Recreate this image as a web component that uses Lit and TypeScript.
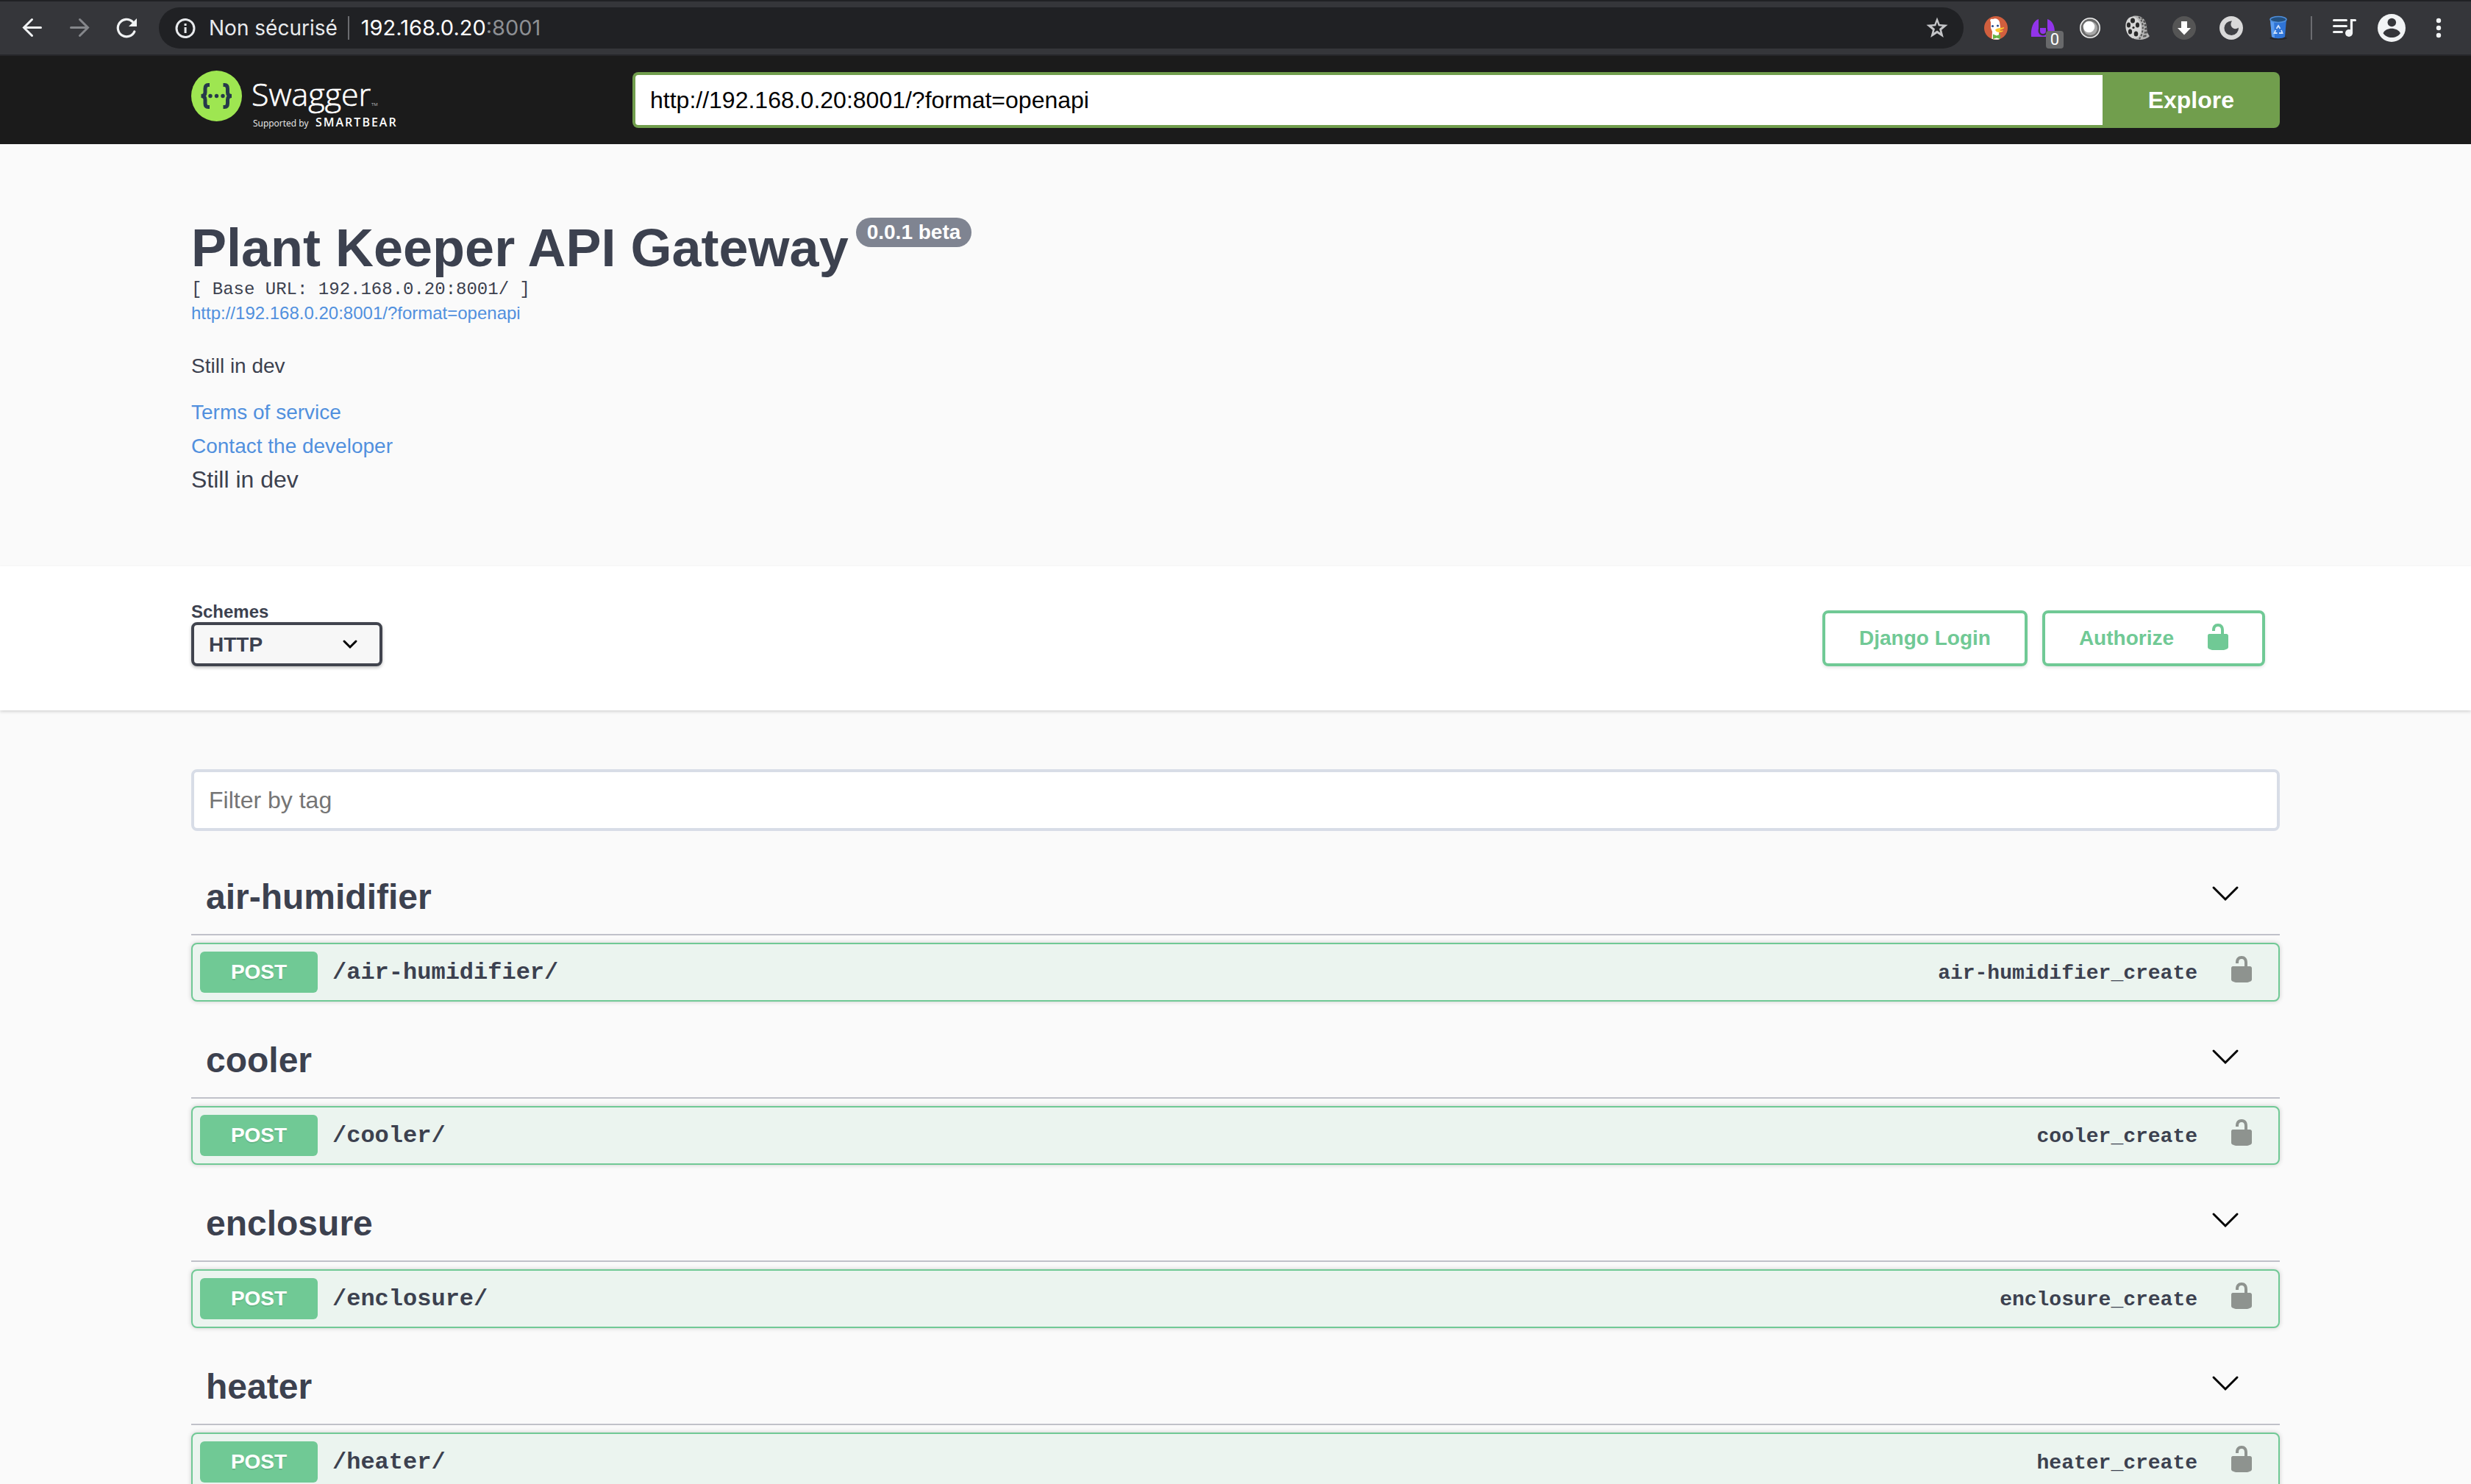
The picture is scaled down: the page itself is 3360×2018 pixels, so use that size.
import { LitElement, html, css, svg } from "lit";
import { customElement, property } from "lit/decorators.js";

const sans = css`"Liberation Sans", Arial, Helvetica, sans-serif`;
const mono = css`"Liberation Mono", "Courier New", monospace`;

const unlocked = svg`<path d="M15.8 8H14V5.6C14 2.703 12.665 1 10 1 7.334 1 6 2.703 6 5.6V6h2v-.801C8 3.754 8.797 3 10 3c1.203 0 2 .754 2 2.199V8H4c-.553 0-1 .646-1 1.199V17c0 .549.428 1.139.951 1.307l1.197.387C5.672 18.861 6.55 19 7.1 19h5.8c.549 0 1.428-.139 1.951-.307l1.196-.387c.524-.167.953-.757.953-1.306V9.199C17 8.646 16.352 8 15.8 8z"/>`;

/* Browser toolbar icons, each drawn in a 40 by 40 box */
const icons = {
  back: svg`<path d="M31.500 19.500H10M19.500 8.500l-11 11 11 11" fill="none" stroke="#f1f3f4" stroke-width="3" stroke-linecap="round"/>`,
  forward: svg`<path d="M8.500 19.500H30M20.500 8.500l11 11-11 11" fill="none" stroke="#85878b" stroke-width="3" stroke-linecap="round"/>`,
  reload: svg`<path d="M30.800 25A11.800 11.800 0 1 1 28.200 11.500" fill="none" stroke="#f1f3f4" stroke-width="3.200" stroke-linecap="round"/><path d="M34 7v11H23z" fill="#f1f3f4"/>`,
  info: svg`<circle cx="20" cy="20.500" r="12" fill="none" stroke="#e8eaed" stroke-width="3"/><path d="M18.600 19h3v8h-3zM18.600 14h3v3h-3z" fill="#e8eaed"/>`,
  star: svg`<path fill-rule="evenodd" fill="#c4c5c8" d="M20 5.500 23.600 15l10.900.8-8.400 7 2.700 10.200L20 27.300 11.200 33l2.700-10.200-8.400-7 10.900-.8zM20 12l-1.800 5.200-5.400.5 4.200 3.500-1.400 5.300 4.400-2.900 4.400 2.900-1.400-5.300 4.200-3.500-5.400-.5z"/>`,
  duck: svg`<circle cx="20" cy="20" r="16" fill="#d15f3e"/>
    <path d="M13 12c-2-3 0-5 3-4 3-2 8 0 9 4l1 7-2 9 1 7.200q-5 1.500-10.500-.4L15 25l-2-5z" fill="#fff"/>
    <circle cx="15.500" cy="17.500" r="1.600" fill="#2d4f8e"/><circle cx="22.500" cy="17" r="1.600" fill="#2d4f8e"/>
    <path d="M19 22.500c3-3 7-2 12-3.500 1 2-4 3.500-7 4 2 1 5 .5 6 .5 0 3-10 4-11-1z" fill="#fbc92f"/>
    <path d="M16 28.500l5 2 5-2v6.500l-5-1.500-5 1.500z" fill="#67b346"/>`,
  purple: svg`<path d="M4 32C3 20 7 10 14 8v13c0 7 2 9 6 9s6-2 6-9V8c7 2 10 9 10 18v6z" fill="#9234ea"/><circle cx="20" cy="24" r="6.500" fill="#35363a"/><path d="M16 20h8v4a4 4 0 0 1-8 0z" fill="#9234ea"/>
    <rect x="24" y="24" width="24" height="24" rx="4" fill="#68696b"/>`,
  orb: svg`<circle cx="20" cy="20" r="13.200" fill="#6a6a6a" stroke="#efefef" stroke-width="1.600"/><circle cx="20.500" cy="20.500" r="9.500" fill="#a8a8a8"/><circle cx="18.500" cy="18.500" r="7.800" fill="#fff"/>`,
  film: svg`<path d="M14 4c9-2 18 2 19 14 0 7 2 11 4 13-4 5-14 6-21 4z" fill="#b5b5b5"/>
    <path d="M22 5c7 5 8 20 1 30M26 6c6 6 7 19 2 28M30 10c4 7 4 16 1 22" stroke="#555" stroke-width="2" fill="none" stroke-dasharray="3 2"/>
    <ellipse cx="15" cy="19.500" rx="10.500" ry="15" transform="rotate(-10 15 19.500)" fill="#d6d6d6"/>
    <g fill="#2a2a2a"><ellipse cx="14" cy="10" rx="3" ry="3.600"/><ellipse cx="8.500" cy="16" rx="2.600" ry="3.500"/><ellipse cx="20.500" cy="16" rx="2.600" ry="3.500"/><ellipse cx="10.500" cy="25" rx="2.600" ry="3.500"/><ellipse cx="18.500" cy="28" rx="2.800" ry="3.500"/><circle cx="15" cy="19.500" r="1.600"/></g>`,
  download: svg`<circle cx="20" cy="20" r="16" fill="#555"/><path d="M16 11h8v9h5l-9 9.500L11 20h5z" fill="#fff"/>`,
  moon: svg`<circle cx="20" cy="20" r="16" fill="#d9d9d9"/><path d="M21 10.500a9.800 9.800 0 1 0 9 9c-6 5-14-2-9-9z" fill="#404145"/>`,
  bin: svg`<ellipse cx="20" cy="34" rx="12" ry="2" fill="#26272a"/><path d="M9 8h22l-2 24c-3 3-15 3-18 0z" fill="#2f74d6"/><path d="M9 8h5l1 25c-2 0-3-.5-4-1z" fill="#5a9cf0"/><ellipse cx="20" cy="8.500" rx="11" ry="4" fill="#24507e" stroke="#4f8fdc" stroke-width="1.500"/><path d="M17.500 21l2.500-4 2.500 4M24 23l1.500 4H21M18.500 27h-4l2-4" fill="none" stroke="#cfe2fb" stroke-width="1.800"/>`,
  music: svg`<path d="M5.500 9.500h17M5.500 17.500h17M5.500 25.500h11" stroke="#f1f3f4" stroke-width="3" stroke-linecap="round"/><circle cx="26" cy="27" r="5" fill="#f1f3f4"/><path d="M29.500 27V9.500h5" fill="none" stroke="#f1f3f4" stroke-width="3.200" stroke-linecap="round"/>`,
  avatar: svg`<circle cx="20" cy="20" r="19" fill="#f1f3f4"/><circle cx="20.300" cy="12.500" r="5.800" fill="#35363a"/><path d="M8.500 27c4-8.500 19-8.500 23.500 0-5 8-18.500 8-23.500 0z" fill="#35363a"/>`,
  dots: svg`<g fill="#f1f3f4"><circle cx="20" cy="10" r="3.200"/><circle cx="20" cy="20" r="3.200"/><circle cx="20" cy="30" r="3.200"/></g>`,
};

@customElement("browser-bar")
class BrowserBar extends LitElement {
  static styles = css`
    :host { display: block; flex: none; }
    .bar {
      display: flex; align-items: center; height: 72px; padding: 0 12px;
      background: #35363a; border-top: 2px solid #202124; border-bottom: 2px solid #26262a;
    }
    .tool {
      display: grid; place-items: center; flex: none; width: 64px; height: 56px;
      padding: 0; border: 0; background: none; position: relative;
    }
    .icon { display: block; width: 40px; height: 40px; overflow: visible; flex: none; }
    .address {
      flex: 1; display: flex; align-items: center; height: 56px; margin: 0 12px;
      padding: 0 4px 0 16px; box-sizing: border-box; border-radius: 28px; background: #202124;
      font: 28px/56px Inter, Roboto, sans-serif; color: #e8eaed;
    }
    .state { margin-left: 12px; }
    .split { width: 2px; height: 32px; margin: 0 16px 0 14px; background: #6b6c70; }
    .url { flex: 1; color: #fff; font-size: 29px; }
    .port { color: #8d8f93; }
    .rule { width: 2px; height: 32px; margin: 0 12px; background: #6b6c70; }
    .count {
      position: absolute; left: 36px; top: 32px; width: 24px;
      font: 22px/24px Roboto, sans-serif; text-align: center; color: #fff;
    }
  `;
  private tool(name: keyof typeof icons, label: string, extra: unknown = "") {
    return html`<button class="tool" aria-label=${label}><svg class="icon" viewBox="0 0 40 40">${icons[name]}</svg>${extra}</button>`;
  }
  render() {
    return html`<div class="bar">
      ${this.tool("back", "Back")}${this.tool("forward", "Forward")}${this.tool("reload", "Reload")}
      <div class="address">
        <svg class="icon" viewBox="0 0 40 40">${icons.info}</svg>
        <span class="state">Non sécurisé</span><span class="split"></span>
        <span class="url">192.168.0.20<span class="port">:8001</span></span>
        ${this.tool("star", "Bookmark")}
      </div>
      ${this.tool("duck", "Search privacy")}
      ${this.tool("purple", "Blocked items", html`<span class="count">0</span>`)}
      ${this.tool("orb", "Orb")}${this.tool("film", "Video")}${this.tool("download", "Downloads")}
      ${this.tool("moon", "Dark mode")}${this.tool("bin", "Clear")}
      <span class="rule"></span>
      ${this.tool("music", "Media")}${this.tool("avatar", "Profile")}${this.tool("dots", "Menu")}
    </div>`;
  }
}

@customElement("tag-section")
class TagSection extends LitElement {
  @property() name = "";
  static styles = css`
    :host { display: block; margin-bottom: 30px; color: #3c414f; }
    .head {
      display: flex; align-items: center; justify-content: space-between; margin: 0 0 10px;
      padding: 20px 54px 20px 20px; border-bottom: 2px solid #c0c1c9;
      font: bold 48px/60px ${sans}; height: 60px;
    }
    .toggle { padding: 0; border: 0; background: none; }
    .arrow { display: block; width: 40px; height: 40px; fill: none; stroke: #000; stroke-width: 3; stroke-linecap: round; }
    .op {
      display: flex; align-items: baseline; padding: 10px 30px 10px 10px;
      border: 2px solid #70c995; border-radius: 8px; background: #ebf4ef;
      box-shadow: 0 0 6px rgba(0, 0, 0, .19);
    }
    .method {
      width: 160px; border-radius: 6px; background: #70c995; color: #fff; text-align: center;
      font: bold 28px/56px ${sans}; text-shadow: 0 2px 0 rgba(0, 0, 0, .1);
    }
    .path { flex: 1; margin-left: 20px; font: bold 32px/40px ${mono}; color: inherit; text-decoration: none; }
    .id { font: bold 28px/40px ${mono}; }
    .auth { align-self: center; margin-left: 40px; padding: 0; border: 0; background: none; }
    .lock { display: block; width: 40px; height: 48px; fill: #8e938f; }
  `;
  render() {
    return html`
      <h3 class="head">${this.name}
        <button class="toggle" aria-label="Collapse ${this.name}">
          <svg class="arrow" viewBox="0 0 40 40"><path d="M4 7l16 16L36 7"/></svg>
        </button>
      </h3>
      <div class="op">
        <span class="method">POST</span>
        <a class="path" href="#${this.name}">/${this.name}/</a>
        <span class="id">${this.name}_create</span>
        <button class="auth" aria-label="Authorization"><svg class="lock" viewBox="0 0 20 24">${unlocked}</svg></button>
      </div>`;
  }
}

@customElement("app-root")
class AppRoot extends LitElement {
  static styles = css`
    :host {
      display: flex; flex-direction: column; height: 100vh; overflow: hidden;
      background: #fafafa; color: #3c414f; font-family: ${sans};
    }
    .page { flex: 1; min-height: 0; overflow: auto; scrollbar-width: none; }
    .wrap { box-sizing: border-box; max-width: 2920px; margin: 0 auto; padding: 0 40px; }
    a { color: #5190de; text-decoration: none; }
    .topbar { background: #1b1b1b; }
    .topbar .wrap { display: flex; align-items: center; padding-top: 20px; padding-bottom: 20px; }
    .brand { flex: 0 0 600px; }
    .logo { display: block; width: 300px; height: 80px; overflow: visible; }
    .word { font: 300 43px "Open Sans", sans-serif; fill: #fff; stroke: #fff; stroke-width: .6px; }
    .tm { font: 6px "Open Sans", sans-serif; fill: #bbb; }
    .by { font: 12px "Open Sans", sans-serif; fill: #eee; }
    .bear { font: 600 16px "Open Sans", sans-serif; letter-spacing: 2px; fill: #fff; }
    .search { flex: 1; display: flex; height: 76px; }
    .address {
      flex: 1; min-width: 0; box-sizing: border-box; padding: 0 20px; border: 4px solid #719e4d; border-right: 0;
      border-radius: 8px 0 0 8px; background: #fff; color: #000; font: 32px ${sans}; outline: none;
    }
    .explore {
      flex: none; padding: 0 62px; border: 0; border-radius: 0 8px 8px 0;
      background: #719e4d; color: #fff; font: bold 32px ${sans};
    }
    .info { padding-top: 100px; padding-bottom: 96px; }
    .title { display: flex; align-items: flex-start; gap: 10px; margin: 0; font: bold 72px/82px ${sans}; }
    .version { padding: 0 15px; border-radius: 20px; background: #7f8491; color: #fff; font: bold 28px/40px ${sans}; }
    .base { margin: 0; font: 24px/32px ${mono}; }
    .spec { display: block; font-size: 24px; line-height: 32px; }
    .about { margin: 38px 0 22px; font-size: 28px; line-height: 36px; }
    .more { display: block; font-size: 28px; line-height: 46px; }
    .license { font-size: 32px; line-height: 44px; }
    .schemes { background: #fff; box-shadow: 0 2px 4px rgba(0, 0, 0, .15); }
    .schemes .wrap { display: flex; align-items: flex-end; gap: 20px; padding-top: 50px; padding-bottom: 60px; }
    .choice { display: grid; gap: 2px; margin-right: auto; }
    .label { font: bold 24px/24px ${sans}; }
    .picker { display: grid; align-items: center; }
    .select {
      grid-area: 1 / 1; appearance: none; width: 260px; height: 60px; padding: 0 20px;
      border: 4px solid #41444e; border-radius: 8px; background: #f7f7f7; color: #3c414f;
      box-shadow: 0 2px 4px rgba(0, 0, 0, .25); font: bold 28px ${sans};
    }
    .down {
      grid-area: 1 / 1; justify-self: end; width: 24px; height: 24px; margin-right: 32px;
      fill: none; stroke: #000; stroke-width: 3; stroke-linecap: round; pointer-events: none;
    }
    .button {
      display: flex; align-items: center; gap: 40px; box-sizing: border-box; height: 76px; padding: 0 46px;
      border: 4px solid #70c995; border-radius: 8px; background: none; color: #70c995;
      box-shadow: 0 2px 4px rgba(0, 0, 0, .1); font: bold 28px ${sans};
    }
    .authorize { padding-right: 40px; margin-right: 20px; }
    .lock { width: 40px; height: 44px; fill: currentColor; }
    .filter {
      display: block; box-sizing: border-box; width: 100%; height: 84px; margin: 80px 0 40px; padding: 0 20px;
      border: 4px solid #d8dde7; border-radius: 8px; background: #fff; color: #3c414f; font: 32px ${sans};
    }
    .filter::placeholder { color: #757575; opacity: 1; }
  `;
  private tags = ["air-humidifier", "cooler", "enclosure", "heater"];
  render() {
    return html`
      <browser-bar></browser-bar>
      <div class="page">
        <header class="topbar"><div class="wrap">
          <a class="brand" href="#" aria-label="Swagger">
            <svg class="logo" viewBox="0 0 300 80">
              <circle cx="34.500" cy="34.500" r="34.500" fill="#9ee651"/>
              <g fill="none" stroke="#26394a" stroke-width="5">
                <path d="M25 19.500h-2q-4 0-4 5v5q0 5-5.500 5 5.500 0 5.500 5v5q0 5 4 5h2"/>
                <path d="M43.500 19.500h2q4 0 4 5v5q0 5 5.500 5-5.500 0-5.500 5v5q0 5-4 5h-2"/>
              </g>
              <g fill="#26394a"><circle cx="26" cy="34.500" r="2.700"/><circle cx="34.500" cy="34.500" r="2.700"/><circle cx="43" cy="34.500" r="2.700"/></g>
              <text class="word" x="82" y="48">Swagger</text>
              <text class="tm" x="245" y="48">TM</text>
              <text class="by" x="84" y="76">Supported by</text>
              <text class="bear" x="169" y="76">SMARTBEAR</text>
            </svg>
          </a>
          <form class="search">
            <input class="address" type="text" aria-label="Specification address" .value=${"http://192.168.0.20:8001/?format=openapi"}>
            <button class="explore" type="button">Explore</button>
          </form>
        </div></header>
        <section class="wrap info">
          <h2 class="title">Plant Keeper API Gateway <span class="version">0.0.1 beta</span></h2>
          <pre class="base">[ Base URL: 192.168.0.20:8001/ ]</pre>
          <a class="spec" href="#spec">http://192.168.0.20:8001/?format=openapi</a>
          <p class="about">Still in dev</p>
          <a class="more" href="#terms">Terms of service</a>
          <a class="more" href="#contact">Contact the developer</a>
          <div class="license">Still in dev</div>
        </section>
        <section class="schemes"><div class="wrap">
          <div class="choice">
            <label class="label" for="scheme">Schemes</label>
            <div class="picker">
              <select class="select" id="scheme"><option>HTTP</option></select>
              <svg class="down" viewBox="0 0 24 24"><path d="M4 8l8 8 8-8"/></svg>
            </div>
          </div>
          <button class="button">Django Login</button>
          <button class="button authorize">Authorize <svg class="lock" viewBox="0 0 20 22">${unlocked}</svg></button>
        </div></section>
        <main class="wrap">
          <input class="filter" type="text" placeholder="Filter by tag" aria-label="Filter by tag">
          ${this.tags.map((t) => html`<tag-section .name=${t}></tag-section>`)}
        </main>
      </div>`;
  }
}
